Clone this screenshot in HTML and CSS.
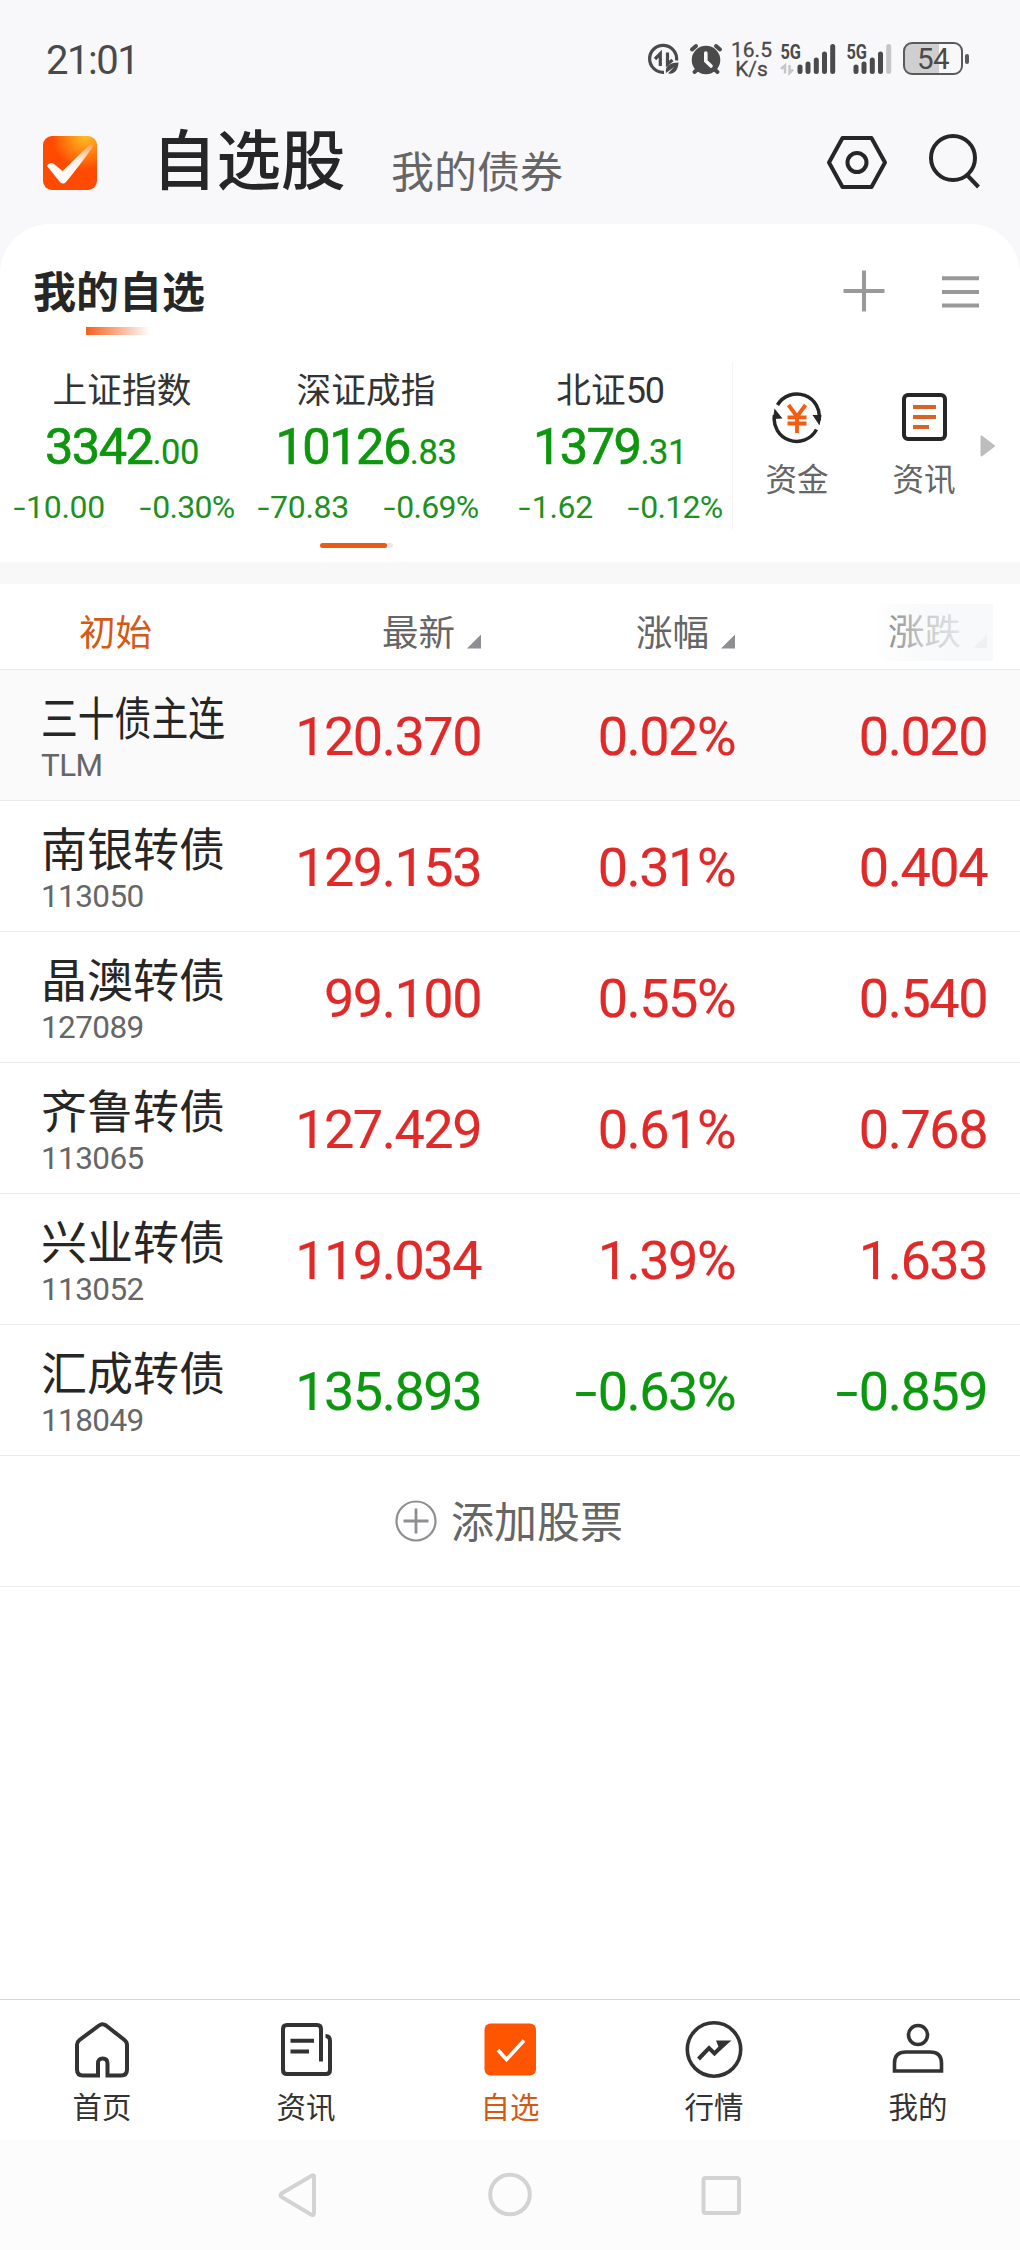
FILE: index.html
```html
<!DOCTYPE html>
<html lang="zh-CN">
<head>
<meta charset="utf-8">
<title>自选股</title>
<link rel="stylesheet" href="styles.css">
</head>
<body>
<div class="status">
  <span class="clock">21:01</span>
  <svg class="st-data" viewBox="646 42 36 34" width="36" height="34">
    <g fill="none" stroke="#4a4a4a" stroke-width="3.2">
      <path d="M664 72.300A13.500 13.500 0 1 1 676.500 60.500"/>
      <path d="M655 59L660.300 53.700V66M667.500 52.500V64L672.500 60"/>
    </g>
    <path d="M666 73C665 66 669 63 678.500 62.500C678 71 674 74.500 668 73.500L674 67Z" fill="#4a4a4a"/>
  </svg>
  <svg class="st-alarm" viewBox="689 42 34 34" width="34" height="34">
    <circle cx="706" cy="60" r="14.300" fill="#4a4a4a"/>
    <g stroke="#4a4a4a" stroke-width="4" stroke-linecap="round" fill="none"><path d="M692 49.500L696 46M720 49.500L716 46M694.500 72L698 69M717.500 72L714 69"/></g>
    <path d="M705.800 53V61L711 66" stroke="#f8f8fb" stroke-width="3.600" fill="none" stroke-linecap="round"/>
  </svg>
  <span class="speed">16.5<br>K/s</span>
  <svg class="st-sig" viewBox="780 38 57 38" width="57" height="38">
    <text x="780.500" y="59" class="g5" textLength="20.500" lengthAdjust="spacingAndGlyphs">5G</text>
    <path d="M781 69L785 65.500V73.500M789.500 65V73L793 69.500" stroke="#c6c6c8" stroke-width="2.500" fill="none"/>
    <g stroke="#4a4a4a" stroke-width="5" stroke-linecap="round"><path d="M800 67V71.500M808 64V71.500M816.300 60V71.500M824.500 54V71.500M832.700 46.500V71.500"/></g>
  </svg>
  <svg class="st-sig2" viewBox="846 38 48 38" width="48" height="38">
    <text x="846.500" y="59" class="g5" textLength="20.500" lengthAdjust="spacingAndGlyphs">5G</text>
    <g stroke="#4a4a4a" stroke-width="5" stroke-linecap="round"><path d="M856 67V71.500M864 64V71.500M872.300 60V71.500M880.500 54V71.500"/><path stroke="#c6c6c8" d="M888.700 46.500V71.500"/></g>
  </svg>
  <span class="battery"><span>54</span></span><i class="bat-cap"></i>
</div>
<header class="top">
  <svg class="logo" viewBox="0 0 54 54" width="54" height="54">
    <defs>
      <radialGradient id="lg" cx=".78" cy="0" r=".62"><stop offset="0" stop-color="#ffbf20"/><stop offset=".35" stop-color="#ff9817"/><stop offset="1" stop-color="#ff4a02"/></radialGradient>
      <linearGradient id="ck" x1=".3" y1="1" x2="1" y2="0"><stop offset="0" stop-color="#fff"/><stop offset=".55" stop-color="#fff2ea"/><stop offset="1" stop-color="#ffa04a"/></linearGradient>
    </defs>
    <rect width="54" height="54" rx="9" fill="url(#lg)"/>
    <path d="M4 30C6 26.500 9 26.500 11 28L19.500 35C28 27 38 17 47 8.500C50 6.500 50.500 9 49 12C40 25 32 35 23 46C20.500 48.500 18 47.500 16.500 45.500Z" fill="url(#ck)"/>
  </svg>
  <h1 class="title">自选股</h1>
  <span class="alt">我的债券</span>
  <svg class="hex" viewBox="826 134 62 56" width="62" height="56"><g fill="none" stroke="#262626" stroke-width="4" stroke-linejoin="round"><path d="M842.500 138H871.500L885 162.500L871.500 187H842.500L829 162.500Z"/><circle cx="857" cy="162.500" r="9.500"/></g></svg>
  <svg class="search" viewBox="927 133 56 57" width="56" height="57"><g fill="none" stroke="#262626" stroke-width="4"><circle cx="953" cy="158" r="22"/><path d="M966.500 174.500L978.500 187"/></g></svg>
</header>
<main class="card">
  <div class="group">
    <div class="group-name">我的自选<i class="underline"></i></div>
    <svg viewBox="842 269 44 44" width="44" height="44"><path d="M864 270.500V311.500M843.500 291H884.500" stroke="#999" stroke-width="4"/></svg>
    <svg class="menu" viewBox="942 269 37 44" width="37" height="44"><path d="M942 278.300H979M942 292H979M942 305.500H979" stroke="#999" stroke-width="4"/></svg>
  </div>
  <div class="market">
    <div class="indexes">
      <div class="index"><div class="iname">上证指数</div><div class="ival">3342<small>.00</small></div><div class="ichg"><span><i>-</i>10.00</span><span><i>-</i>0.30%</span></div></div>
      <div class="index"><div class="iname">深证成指</div><div class="ival">10126<small>.83</small></div><div class="ichg"><span><i>-</i>70.83</span><span><i>-</i>0.69%</span></div></div>
      <div class="index"><div class="iname">北证<b>50</b></div><div class="ival">1379<small>.31</small></div><div class="ichg"><span><i>-</i>1.62</span><span><i>-</i>0.12%</span></div></div>
      <div class="pager"><i></i></div>
    </div>
    <div class="tools">
      <div class="tool"><svg viewBox="770 390 54 54" width="54" height="54">
        <g fill="none" stroke="#262626" stroke-width="3.500"><path d="M777.500 405A22.500 22.500 0 0 1 819 420.500M816.500 429.500A22.500 22.500 0 0 1 774.500 415"/></g>
        <path d="M812.500 415H821.500L819.500 425.500ZM774.500 408.500L782.500 418.500L773 419Z" fill="#262626"/>
        <path d="M788.500 405L797 416.500L805.500 405M797 416V433M787.500 417.300H806.500M787.500 423.500H806.500" fill="none" stroke="#f65c0e" stroke-width="3.800"/>
      </svg><span>资金</span></div>
      <div class="tool second"><svg viewBox="897 390 54 54" width="54" height="54">
        <rect x="904" y="395" width="41" height="44" rx="4" fill="none" stroke="#262626" stroke-width="4"/>
        <path d="M913 407H936M913 417H936M913 427H929" stroke="#d96325" stroke-width="4"/>
      </svg><span>资讯</span></div>
      <svg class="more" viewBox="0 0 16 22" width="16" height="22"><path d="M1.500 1.500L14 11L1.500 20.500Z" fill="#bdbdbd" stroke="#bdbdbd" stroke-width="2" stroke-linejoin="round"/></svg>
    </div>
  </div>
</main>
<section class="quotes">
  <div class="thead"><span class="first">初始</span><span class="sort">最新<i></i></span><span class="sort">涨幅<i></i></span><span class="sort fade">涨跌<i></i></span></div>
  <div class="row pinned"><div class="stock"><b class="narrow">三十债主连</b><small>TLM</small></div><span>120.370</span><span>0.02%</span><span>0.020</span></div>
  <div class="row"><div class="stock"><b>南银转债</b><small>113050</small></div><span>129.153</span><span>0.31%</span><span>0.404</span></div>
  <div class="row"><div class="stock"><b>晶澳转债</b><small>127089</small></div><span>99.100</span><span>0.55%</span><span>0.540</span></div>
  <div class="row"><div class="stock"><b>齐鲁转债</b><small>113065</small></div><span>127.429</span><span>0.61%</span><span>0.768</span></div>
  <div class="row"><div class="stock"><b>兴业转债</b><small>113052</small></div><span>119.034</span><span>1.39%</span><span>1.633</span></div>
  <div class="row down"><div class="stock"><b>汇成转债</b><small>118049</small></div><span>135.893</span><span><i>-</i>0.63%</span><span><i>-</i>0.859</span></div>
  <div class="add"><svg viewBox="0 0 42 42" width="42" height="42"><g fill="none" stroke="#8e8e93"><circle cx="21" cy="21" r="19.500" stroke-width="2.200"/><path d="M21 8.500V33.500M8.500 21H33.500" stroke-width="2.800"/></g></svg><span>添加股票</span></div>
</section>
<nav class="tabs">
  <div class="tab"><svg viewBox="71 2020 60 60" width="60" height="60"><path d="M97 2075.500H82Q76 2075.500 76 2069.500V2044.500Q76 2042 78.500 2040L98 2025.500Q101.500 2023 105 2025.500L123.500 2040Q126 2042 126 2045V2069.500Q126 2075.500 120 2075.500H106.500V2063.500Q106.500 2058.500 101.700 2058.500T97 2063.500Z" class="ln"/></svg><span>首页</span></div>
  <div class="tab"><svg viewBox="275 2020 60 60" width="60" height="60"><path d="M320 2061.500V2029Q320 2025 316 2025H286Q282 2025 282 2029V2070Q282 2074 286 2074H325Q329 2074 329 2070V2041Q329 2036 324.500 2036M289.500 2040.700H313M289.500 2051.500H308" class="ln"/></svg><span>资讯</span></div>
  <div class="tab active"><svg viewBox="479.500 2020 60 60" width="60" height="60"><rect x="484" y="2023.500" width="51.500" height="52" rx="6" fill="#ff5400"/><path d="M497.500 2050L506 2059.500L523.500 2040.500" fill="none" stroke="#fff" stroke-width="3.600"/></svg><span>自选</span></div>
  <div class="tab"><svg viewBox="683.500 2020 60 60" width="60" height="60"><circle cx="713.500" cy="2049.500" r="26.700" class="ln thin"/><path d="M698 2059L708.500 2048L714 2053.500L725 2042.500" class="ln"/><path d="M715.500 2040.500H731L719.500 2050.500Z" fill="#333"/></svg><span>行情</span></div>
  <div class="tab"><svg viewBox="887 2020 60 60" width="60" height="60"><circle cx="917" cy="2035" r="9.500" class="ln thin"/><path d="M893.500 2071V2063Q893.500 2052 905 2052H929Q940.500 2052 940.500 2063V2071Z" class="ln thin"/></svg><span>我的</span></div>
</nav>
<div class="sysnav">
  <svg viewBox="276 2172 42 46" width="42" height="46"><path d="M312 2175.500L281.500 2193.500Q279.500 2195.200 281.500 2197L311 2214.500Q314 2216 314 2213V2177Q314 2174.500 312 2175.500Z"/></svg>
  <svg viewBox="486 2172 48 46" width="48" height="46"><circle cx="510" cy="2194.500" r="19.800"/></svg>
  <svg viewBox="700 2172 42 46" width="42" height="46"><rect x="703.500" y="2178" width="35.500" height="35" rx="2"/></svg>
</div>
</body>
</html>
```
FILE: styles.css
```css
* { box-sizing: border-box; }
body {
  margin: 0; width: 1020px; height: 2250px; display: flex; flex-direction: column;
  background: #f8f8fb; color: #262626; overflow: hidden;
  font-family: "Noto Sans CJK SC", sans-serif;
}
svg { display: block; flex: none; }
i { font-style: normal; }
.status { height: 118px; padding: 42px 0 0 46px; display: flex; align-items: flex-start; font-family: Roboto, sans-serif; color: #4a4a4a; }
.clock { font-size: 40px; line-height: 38px; width: 600px; letter-spacing: -1.500px; }
.st-alarm { margin-left: 7px; }
.speed { width: 57px; text-align: center; font-size: 21px; line-height: 19px; margin-top: -1px; -webkit-text-stroke: .3px; }
.g5 { font-family: Roboto, sans-serif; font-weight: 700; font-size: 20px; fill: #4a4a4a; }
.st-sig, .st-sig2 { margin-top: -4px; }
.st-sig2 { margin-left: 9px; }
.battery { width: 60px; height: 33px; margin-left: 9px; border: 2.500px solid #5a5a5a; border-radius: 9px; background: linear-gradient(90deg, #cfcfd1 60%, transparent 60%); display: flex; justify-content: center; align-items: center; font-size: 29.500px; letter-spacing: -.5px; }
.bat-cap { width: 4px; height: 10px; border-radius: 2px; background: #5a5a5a; margin: 12px 0 0 2px; }
.top { height: 106px; display: flex; align-items: flex-start; padding-left: 43px; }
.logo { margin-top: 18px; }
.title { margin: -9px 0 0 55px; font-size: 64.500px; font-weight: 500; line-height: 95px; width: 236px; white-space: nowrap; }
.alt { margin: 21px 0 0 3px; font-size: 43px; line-height: 60px; color: #666; width: 435px; }
.hex { margin-top: 16px; }
.search { margin: 15px 0 0 39px; }
.card { height: 338px; background: #fff; border-radius: 50px 50px 0 0; flex: none; }
.group { height: 126px; padding: 45px 41px 0 33px; display: flex; align-items: flex-start; }
.group-name { flex: 1; font-size: 43px; font-weight: 700; line-height: 40px; display: flex; flex-direction: column; }
.underline { width: 64px; height: 8px; margin: 18px 0 0 53px; background: linear-gradient(90deg, #f5601a, #fff); }
.menu { margin-left: 56px; }
.market { display: flex; height: 212px; }
.indexes { width: 735px; display: grid; grid-template-columns: 244px 244px 244px; align-content: start; background: linear-gradient(#f5f5f5, #f5f5f5) 732px 12px / 1px 168px no-repeat; }
.index { text-align: center; height: 193px; padding-top: 13px; }
.iname { font-size: 34.700px; line-height: 50px; height: 50px; color: #333; white-space: nowrap; }
.iname b { font: 400 36px/30px Roboto, sans-serif; letter-spacing: -1.300px; }
.ival { font: 400 50.500px/56px Roboto, sans-serif; letter-spacing: -1.500px; color: #0e960e; margin-top: 6px; height: 56px; -webkit-text-stroke: .7px #0e960e; }
.ival small { font-size: 34.500px; letter-spacing: -.4px; -webkit-text-stroke: .2px; }
.ichg { display: grid; grid-template-columns: 105px 105px; gap: 34px; font: 400 32px/40px Roboto, sans-serif; color: #1f911f; margin-top: 12px; white-space: nowrap; letter-spacing: -.3px; }
.ichg span { justify-self: start; }
.ichg span + span { letter-spacing: -.7px; }
.ichg span:first-child { justify-self: end; }
.ichg i, .row i { display: inline-block; transform: scaleX(1.35); margin: 0 3px 0 2px; }
.pager { grid-column: 1 / 4; width: 73px; height: 5px; border-radius: 3px; background: #e8e8e8; margin-left: 320px; }
.pager i { display: block; width: 67px; height: 5px; border-radius: 3px; background: #ea5b18; }
.tools { display: flex; padding-left: 31px; }
.tool { width: 62px; margin-top: 40px; display: flex; flex-direction: column; align-items: center; font-size: 31.500px; line-height: 46px; color: #666; white-space: nowrap; }
.tool span { margin-top: 10px; }
.second { margin-left: 65px; }
.more { margin: 85px 0 0 25px; }
.quotes { flex: 1; background: #fff; border-top: 22px solid #f8f8f8; }
.thead { height: 86px; border-bottom: 1px solid #ebebeb; display: flex; align-items: center; font-size: 36.500px; line-height: 50px; color: #666; padding-top: 8px; }
.first { width: 227px; padding-left: 79px; color: #d35a15; }
.sort { width: 254px; display: flex; justify-content: flex-end; align-items: flex-end; }
.sort i { width: 14px; height: 14px; margin: 0 0 7px 12px; background: #8e8e93; clip-path: polygon(100% 0, 100% 100%, 0 100%); }
.fade { position: relative; width: 121px; height: 57px; margin: 4px 0 0 137px; padding: 0 6px 6px 0; color: #777; background: linear-gradient(90deg, #fff, #f8f9fa 60%); }
.fade::after { content: ""; position: absolute; inset: 0; background: linear-gradient(90deg, rgba(248,249,250,0) 0, rgba(248,249,250,.65) 45%, rgba(248,249,250,.92) 85%); }
.row { height: 131px; border-bottom: 1px solid #ebebeb; display: flex; color: #e02a2a; font: 400 54px/133px Roboto, sans-serif; letter-spacing: -1.500px; -webkit-text-stroke: .2px; }
.row > span { width: 254px; text-align: right; white-space: nowrap; }
.row > span:last-child { width: 252px; }
.row i { margin: 0 6px 0 4px; transform: scaleX(1.5); }
.pinned { background: #fafafa; }
.down { color: #0c980e; }
.stock { width: 227px; padding: 16px 0 0 41px; display: flex; flex-direction: column; color: #262626; letter-spacing: 0; white-space: nowrap; -webkit-text-stroke: 0; }
.stock b { font: 400 46px/58px "Noto Sans CJK SC", sans-serif; height: 58px; }
.stock .narrow { transform: scaleX(.8); transform-origin: 0 0; }
.stock small { font: 400 31.500px/44px Roboto, sans-serif; color: #666; letter-spacing: -.6px; }
.add { height: 131px; border-bottom: 1px solid #ebebeb; display: flex; align-items: center; justify-content: center; gap: 14px; font-size: 43px; line-height: 60px; color: #666; padding-right: 2px; }
.add span { margin-top: -4px; }
.tabs { height: 141px; flex: none; background: #fff; border-top: 1px solid #d6d6d6; display: grid; grid-template-columns: repeat(5, 1fr); }
.tab { display: flex; flex-direction: column; align-items: center; padding-top: 20px; font-size: 29.500px; line-height: 44px; color: #333; }
.tab span { margin-top: 3px; }
.active { color: #d35a15; }
.ln { fill: none; stroke: #333; stroke-width: 4; }
.thin { stroke-width: 3.600; }
.sysnav { height: 110px; flex: none; background: #fcfcfc; padding: 32px 0 0 276px; display: flex; }
.sysnav svg { fill: none; stroke: #d3d3d3; stroke-width: 4; }
.sysnav svg + svg { margin-left: 168px; }
.sysnav svg:last-child { margin-left: 166px; }
```
